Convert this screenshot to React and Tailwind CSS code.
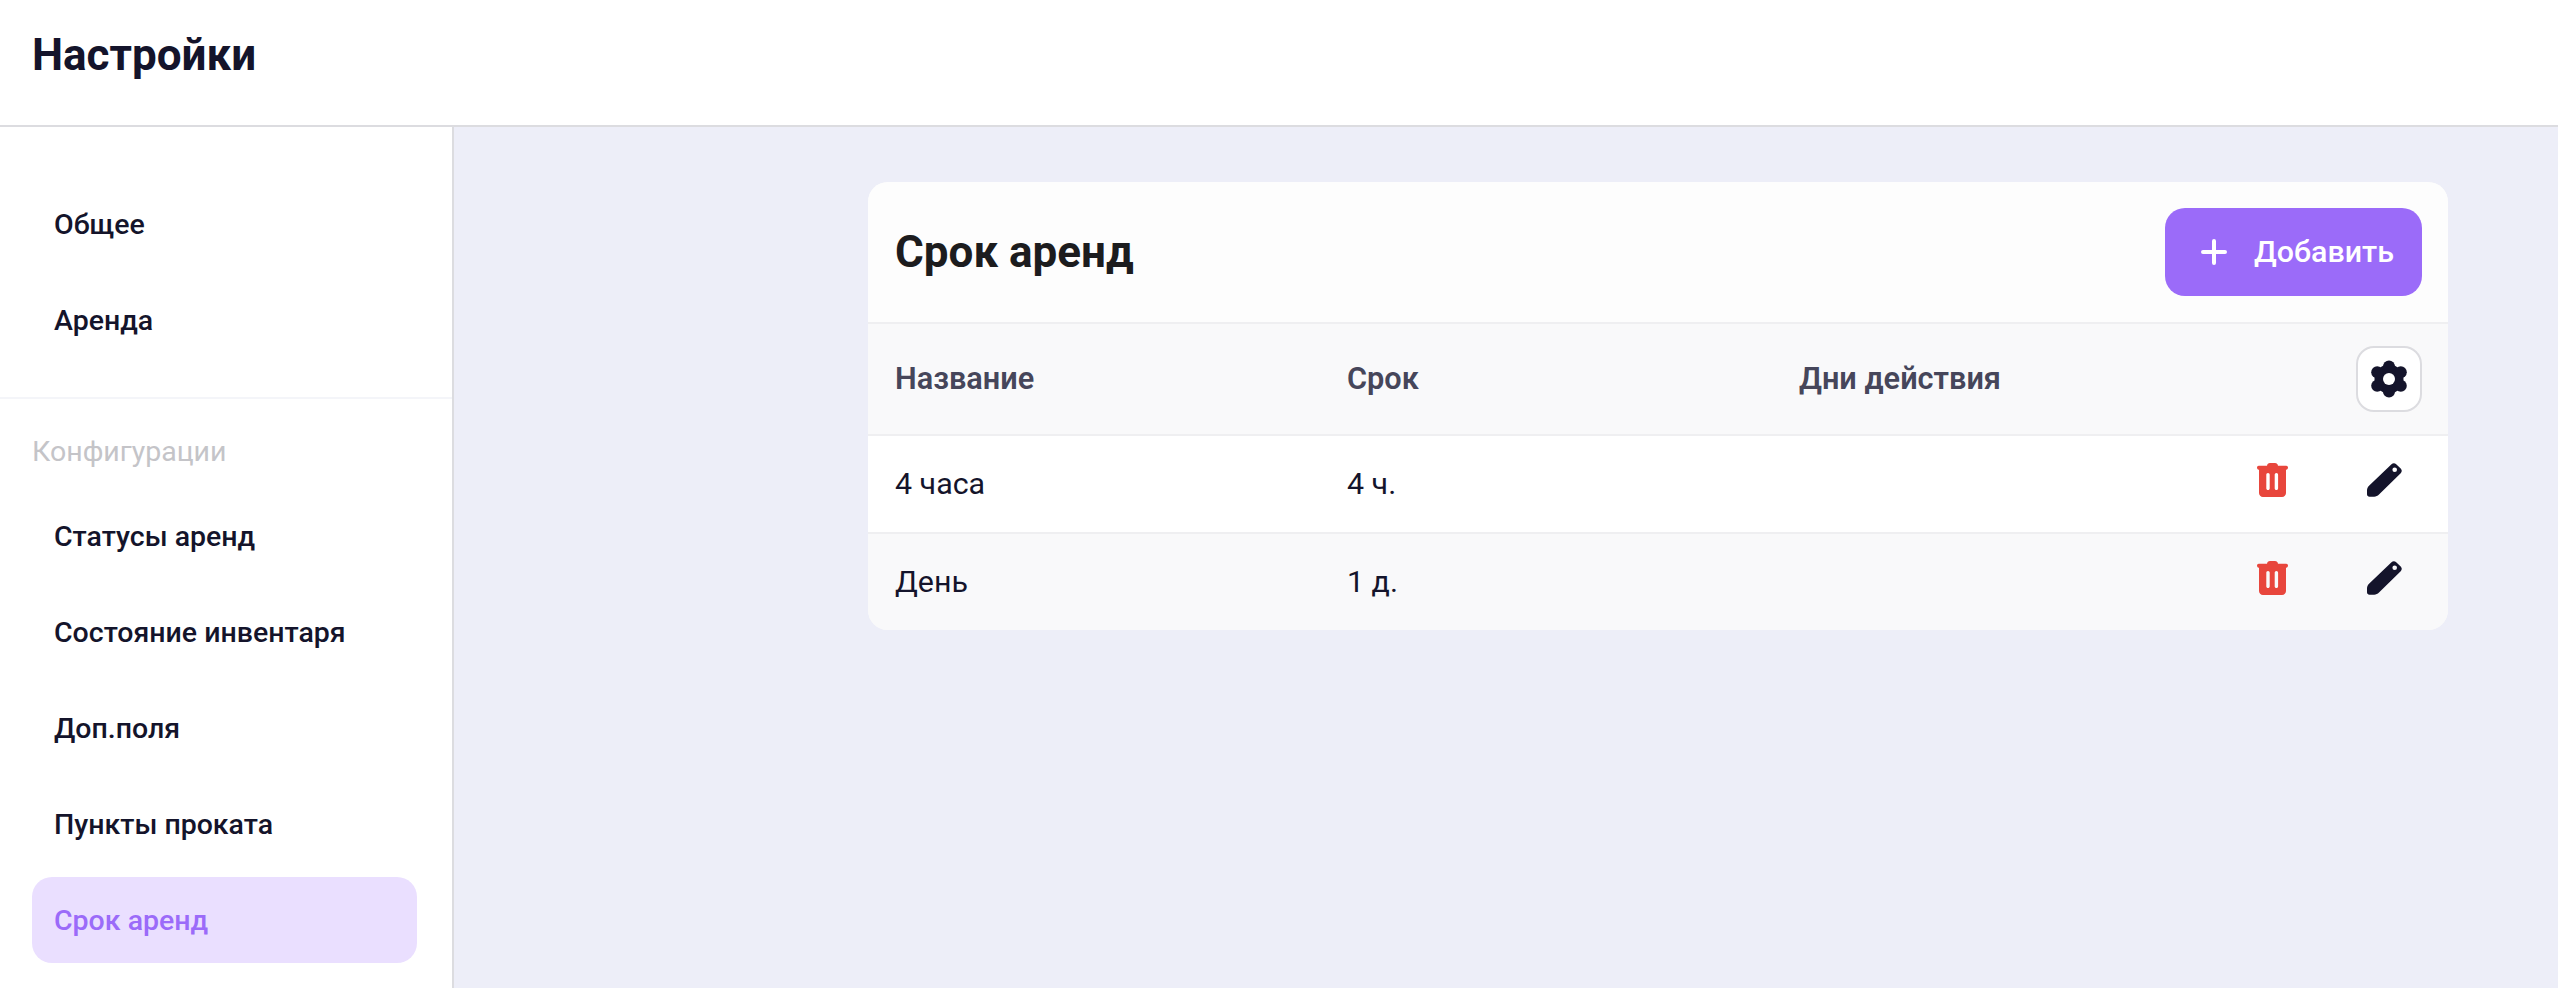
import React from 'react';

const GeneralLinks = ['Общее', 'Аренда'];
const ConfigLinks = ['Статусы аренд', 'Состояние инвентаря', 'Доп.поля', 'Пункты проката', 'Срок аренд'];
const rows = [
  { name: '4 часа', term: '4 ч.', bg: 'bg-white h-[98px] border-b-2 border-[#efeff1]' },
  { name: 'День', term: '1 д.', bg: 'bg-[#f9f9fa] h-[96px]' },
];

const NavItem = ({ label, active }) => (
  <div
    className={`h-[86px] flex items-center px-[22px] pt-[2px] rounded-[20px] text-[28.5px] font-medium ${
      active ? 'bg-[#eadfff] text-[#9b6bf9]' : 'text-[#14142b]'
    }`}
  >
    {label}
  </div>
);

const TrashIcon = () => (
  <svg width="31" height="34" viewBox="0 0 31 34" fill="none">
    <path
      fillRule="evenodd"
      fill="#e8463c"
      d="M10 2.700C10.300 1 11.300 0 13 0h5c1.700 0 2.700 1 3 2.700h8.300c1 0 1.700.8 1.700 1.900s-.7 2.100-1.700 2.100H29V30c0 2.300-1.700 4-4 4H6c-2.300 0-4-1.700-4-4V6.700H1.700C.7 6.700 0 5.700 0 4.600s.7-1.900 1.700-1.900H10zM11 10c-1 0-1.700.8-1.700 1.800v13.400c0 1 .7 1.800 1.700 1.800s1.700-.8 1.700-1.800V11.800C12.700 10.800 12 10 11 10zm8.400 0c-1 0-1.700.8-1.700 1.800v13.400c0 1 .7 1.800 1.700 1.800s1.700-.8 1.700-1.800V11.800c0-1-.7-1.800-1.700-1.800z"
    />
  </svg>
);

const PenIcon = () => (
  <svg width="35" height="34" viewBox="0 0 35 34" fill="none">
    <path
      fillRule="evenodd"
      fill="#14142b"
      d="M24.500 1.200c1.400-1.400 3.300-1.400 4.700 0l4.500 4.300c1.400 1.400 1.400 3.300 0 4.700L12 31.500c-1.400 1.300-3 2.100-4.800 2.200H2.500C1 33.700 0 32.700 0 31.200v-3.700c0-1.900.7-3.400 2-4.800L24.500 1.200zM27.700 4.500a2.300 2.300 0 1 0 0 4.600 2.300 2.300 0 0 0 0-4.600z"
    />
  </svg>
);

// six round lobes, hole is just the button background
const GearIcon = () => (
  <svg width="38" height="38" viewBox="0 0 38 38" fill="#14142b">
    <circle cx="19" cy="19" r="14.500" />
    <circle cx="19" cy="6.500" r="6" />
    <circle cx="19" cy="31.500" r="6" />
    <circle cx="7.200" cy="12.200" r="6" />
    <circle cx="30.800" cy="12.200" r="6" />
    <circle cx="7.200" cy="25.800" r="6" />
    <circle cx="30.800" cy="25.800" r="6" />
    <circle cx="19" cy="19" r="6" fill="white" />
  </svg>
);

const App = () => {
  return (
    <div className="h-[988px] flex flex-col overflow-hidden bg-[#edeef8] font-['Roboto',sans-serif]">
      <header className="h-[127px] shrink-0 flex items-center px-8 pb-[16px] bg-white border-b-2 border-[#dcdce0]">
        <h1 className="text-[44px] font-bold text-[#14142b]">Настройки</h1>
      </header>

      <div className="flex-1 flex min-h-0">
        <aside className="w-[454px] shrink-0 bg-white border-r-2 border-[#dcdce0] pt-[54px]">
          <div className="px-8 flex flex-col gap-[10px] pb-[34px] border-b-2 border-[#f4f5f9]">
            {GeneralLinks.map((label) => (
              <NavItem key={label} label={label} />
            ))}
          </div>
          <div className="pl-8 pr-[35px] pt-[31px]">
            <div className="text-[28.5px] leading-[44px] text-[#c4c4c8]">Конфигурации</div>
            <div className="flex flex-col gap-[10px] mt-[19px]">
              {ConfigLinks.map((label) => (
                <NavItem key={label} label={label} active={label === 'Срок аренд'} />
              ))}
            </div>
          </div>
        </aside>

        <main className="flex-1 pt-[55px] pl-[414px] pr-[110px]">
          <div className="rounded-[20px] overflow-hidden bg-[#f9f9fa]">
            <div className="h-[142px] flex items-center justify-between pl-[27px] pr-[26px] bg-[#fdfdfd] border-b-2 border-[#efeff1]">
              <h2 className="text-[44px] font-bold text-[#1c1c1e]">Срок аренд</h2>
              <button className="h-[88px] w-[257px] flex items-center gap-[27px] pl-[36px] rounded-[20px] bg-[#9b6bf9] text-white text-[30.4px] font-medium">
                <svg width="26" height="26" viewBox="0 0 26 26" fill="none" stroke="white" strokeWidth="4" strokeLinecap="round">
                  <path d="M13 2v22M2 13h22" />
                </svg>
                Добавить
              </button>
            </div>

            <div className="h-[112px] grid grid-cols-[452px_452px_1fr_66px] items-center pl-[27px] pr-[26px] bg-[#f9f9fa] border-b-2 border-[#efeff1] text-[30.7px] font-semibold text-[#46465a]">
              <div>Название</div>
              <div>Срок</div>
              <div>Дни действия</div>
              <div className="w-[66px] h-[66px] flex items-center justify-center rounded-[18px] bg-white border-2 border-[#dcdce0]">
                <GearIcon />
              </div>
            </div>

            {rows.map((row) => (
              <div
                key={row.name}
                className={`grid grid-cols-[452px_1fr_auto] items-center pl-[27px] pr-[46px] text-[30.4px] text-[#14142b] ${row.bg}`}
              >
                <div>{row.name}</div>
                <div>{row.term}</div>
                <div className="flex gap-[79px] mb-[8px]">
                  <TrashIcon />
                  <PenIcon />
                </div>
              </div>
            ))}
          </div>
        </main>
      </div>
    </div>
  );
};

export default App;
